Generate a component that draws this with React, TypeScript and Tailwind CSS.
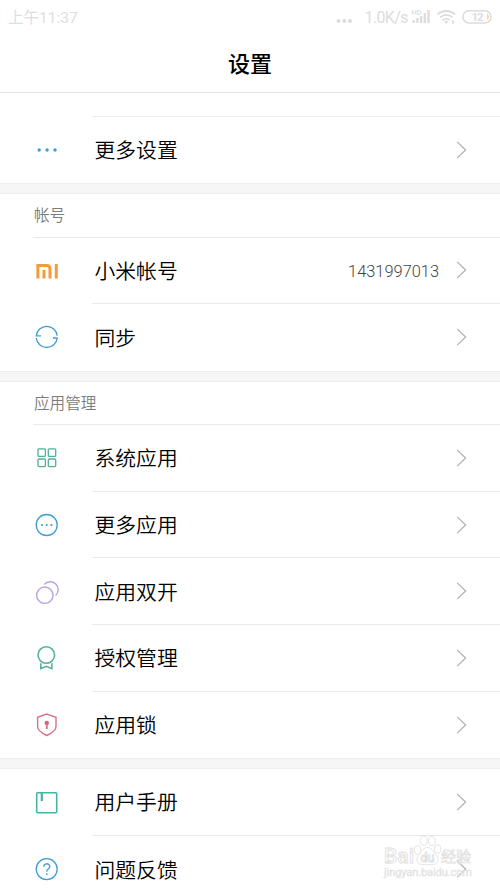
import type { ReactNode } from "react";

const blue = "#3f9fcf";
const green = "#4fb196";

const icons: Record<string, ReactNode> = {
  more: (
    <g fill={blue}>
      <circle cx="6.2" cy="14" r="1.7" />
      <circle cx="14.1" cy="14" r="1.7" />
      <circle cx="22" cy="14" r="1.7" />
    </g>
  ),
  mi: (
    <g stroke="#f79a3b" strokeWidth="3" fill="none">
      <path d="M4.9 21.5V8.6h8.9c2.2 0 3.2 1.2 3.2 3.4v9.5" />
      <path d="M11 13v8.5M23.3 7.1v14.4" />
    </g>
  ),
  sync: (
    <g stroke={blue} strokeWidth="1.3" fill="none">
      <path d="M8 12.8H3.3A10.5 10.5 0 0 1 24.2 12.8" />
      <path d="M19.8 15h4.4A10.5 10.5 0 0 1 3.3 15" />
    </g>
  ),
  grid: (
    <g stroke={green} strokeWidth="1.3" fill="none">
      <rect x="5" y="4.8" width="7.4" height="7.6" rx="1" />
      <rect x="15.3" y="4.8" width="7.4" height="7.6" rx="1" />
      <rect x="5" y="15" width="7.4" height="7.6" rx="1" />
      <rect x="15.3" y="15" width="7.4" height="7.6" rx="1" />
    </g>
  ),
  chat: (
    <g fill={blue}>
      <circle cx="13.7" cy="14" r="10.5" fill="none" stroke={blue} strokeWidth="1.3" />
      <circle cx="9" cy="14" r="1.1" />
      <circle cx="13.7" cy="14" r="1.1" />
      <circle cx="18.4" cy="14" r="1.1" />
    </g>
  ),
  dual: (
    <g stroke="#b8a2e2" strokeWidth="1.4" fill="none">
      <circle cx="11.8" cy="17.2" r="8.2" />
      <path d="M11.2 6.4A8 8 0 1 1 22.6 17.6" />
    </g>
  ),
  badge: (
    <g stroke={green} strokeWidth="1.5" fill="none">
      <circle cx="13.3" cy="11" r="8.3" />
      <path d="M7.8 19.3v5.4l5.6-2.4 5.5 2.4v-5.4" />
    </g>
  ),
  lock: (
    <g stroke="#d9708a" strokeWidth="1.4" fill="none">
      <path d="M13.8 3.1 23 6.3v9.2c0 4-4.6 6.8-9.2 9-4.6-2.2-9.2-5-9.2-9V6.3Z" />
      <circle cx="13.8" cy="12" r="2.2" fill="#d9607c" stroke="none" />
      <path d="M13.8 12.5V18" strokeWidth="1.8" />
    </g>
  ),
  book: (
    <g stroke="#45b5a0" strokeWidth="1.6" fill="none">
      <rect x="3.7" y="3.8" width="20" height="20" rx="1" />
      <path d="M8.8 4v8" strokeWidth="2.2" />
    </g>
  ),
  help: (
    <g stroke={blue} strokeWidth="1.3" fill="none">
      <circle cx="13.7" cy="14.1" r="10.5" />
      <path d="M10.7 11.8c0-4 6.1-4 6.1-.2 0 2.4-3 2.5-3 5.1" />
      <path d="M13.8 18.3v1.6" />
    </g>
  ),
};

const groups = [
  {
    id: "general",
    title: "",
    rows: [{ label: "更多设置", icon: "more", value: "" }],
  },
  {
    id: "account",
    title: "帐号",
    rows: [
      { label: "小米帐号", icon: "mi", value: "1431997013" },
      { label: "同步", icon: "sync", value: "" },
    ],
  },
  {
    id: "apps",
    title: "应用管理",
    rows: [
      { label: "系统应用", icon: "grid", value: "" },
      { label: "更多应用", icon: "chat", value: "" },
      { label: "应用双开", icon: "dual", value: "" },
      { label: "授权管理", icon: "badge", value: "" },
      { label: "应用锁", icon: "lock", value: "" },
    ],
  },
  {
    id: "help",
    title: "",
    rows: [
      { label: "用户手册", icon: "book", value: "" },
      { label: "问题反馈", icon: "help", value: "" },
    ],
  },
];

function StatusBar() {
  return (
    <div className="flex h-[34px] items-center justify-between pl-[8px] pr-[7px] text-[#dedede]">
      <span className="pt-[3px] text-[15.5px]">上午11:37</span>
      <svg width="160" height="34" viewBox="0 0 160 34" fill="#dcdcdc">
        <circle cx="5.5" cy="21" r="2" />
        <circle cx="11.3" cy="21" r="2" />
        <circle cx="17" cy="21" r="2" />
        <text x="31.5" y="23" fontSize="16" textLength="44">1.0K/s</text>
        <text x="78.5" y="14.5" fontSize="7.5" fontWeight="500">HD</text>
        <path d="M79.5 20h2.4v3h-2.4zM83.2 18h2.4v5h-2.4zM86.9 16h2.4v7h-2.4zM90.6 13H93v10h-2.4zM94.3 10h2.4v13h-2.4z" />
        <g fill="none" stroke="#dcdcdc" strokeWidth="1.8">
          <path d="M104.5 14.3c5-4.4 12.6-4.4 17.4 0M107 17.3c3.6-3.2 9-3.2 12.4 0M109.6 20.2c2.1-1.8 5.2-1.8 7.2 0" />
          <rect x="130" y="10.7" width="28" height="12.2" rx="6" strokeWidth="1.5" />
        </g>
        <circle cx="113.2" cy="22" r="1.6" />
        <path d="m120 20 1.6 2h-3.2zM120 24.4l1.6-2h-3.2z" />
        <text x="138.5" y="20.8" fontSize="11.5" fontWeight="700" textLength="12">12</text>
        <path d="M154.5 13.8q2.5 3 0 6z" fill="#fbdcab" stroke="#fbdcab" />
      </svg>
    </div>
  );
}

function Row({ row, last }: any) {
  return (
    <div className="flex h-[66.6px] pl-[33px]">
      <div className="flex w-[59px] shrink-0 items-center">
        <svg width="28" height="28" viewBox="0 0 28 28">
          {icons[row.icon]}
        </svg>
      </div>
      <div
        className={`flex flex-1 items-center pl-[2.5px] pr-[33px] ${
          last ? "" : "border-b border-[#e9e9e9]"
        }`}
      >
        <span className="flex-1 pt-[4px] text-[20.8px] font-[350] text-black">{row.label}</span>
        <span className="mr-[17px] pt-[4px] text-[16.4px] font-light text-[#444444]">{row.value}</span>
        <svg width="11" height="18" viewBox="0 0 11 18" fill="none" stroke="#b3b3b3" strokeWidth="1.3">
          <path d="m1.2.9 8.4 8.1-8.4 8.1" />
        </svg>
      </div>
    </div>
  );
}

function Watermark() {
  return (
    <svg
      className="absolute left-[380px] top-[832px]"
      width="96"
      height="50"
      viewBox="0 0 96 50"
      fill="#ffffff"
      stroke="#dedede"
      strokeWidth="0.8"
    >
      <text x="4" y="30.5" fontSize="20" fontWeight="500" textLength="30" lengthAdjust="spacingAndGlyphs">
        Bai
      </text>
      <ellipse cx="37.5" cy="18" rx="3.2" ry="4.3" />
      <ellipse cx="43.7" cy="8.8" rx="3.4" ry="4.6" />
      <ellipse cx="51.8" cy="9" rx="3.4" ry="4.6" />
      <ellipse cx="57.6" cy="17" rx="3.2" ry="4.3" />
      <path d="M47.5 15.5c4 0 5 3.5 8 6.5 4 3.5 3.5 10-2 10.5-3 .2-9 .2-12 0-5.5-.5-6-7-2-10.5 3-3 4-6.5 8-6.5Z" />
      <text x="40.5" y="29.5" fontSize="12.5" fontWeight="500" textLength="14">du</text>
      <text x="61" y="30" fontSize="15" fontWeight="400" strokeWidth="0.7">经验</text>
      <text x="4" y="43.5" fontSize="11" strokeWidth="0.4" fill="#eeeeee" textLength="88">jingyan.baidu.com</text>
    </svg>
  );
}

export default function App() {
  return (
    <div className="relative h-[889px] w-[500px] overflow-hidden bg-white font-[Roboto,'Noto_Sans_CJK_SC',sans-serif]">
      <StatusBar />
      <div className="flex h-[59px] items-center justify-center border-b border-[#e6e6e6] pt-[2px] text-[22px] font-medium text-black">
        设置
      </div>
      <div className="ml-[92px] h-[23.6px] border-b border-[#eeeeee]" />

      {groups.map((group, i) => (
        <div key={group.id}>
          {i > 0 && <div className="h-[11.2px] border-y border-[#ededed] bg-[#f6f6f6]" />}
          {group.title && (
            <div className="ml-[33px] flex h-[43.2px] items-center border-b border-[#e9e9e9] pt-[3px] pl-px text-[15.6px] font-[350] text-[#7c7c7c]">
              {group.title}
            </div>
          )}
          {group.rows.map((row, j) => (
            <Row key={row.label} row={row} last={j === group.rows.length - 1} />
          ))}
        </div>
      ))}

      <Watermark />
    </div>
  );
}
